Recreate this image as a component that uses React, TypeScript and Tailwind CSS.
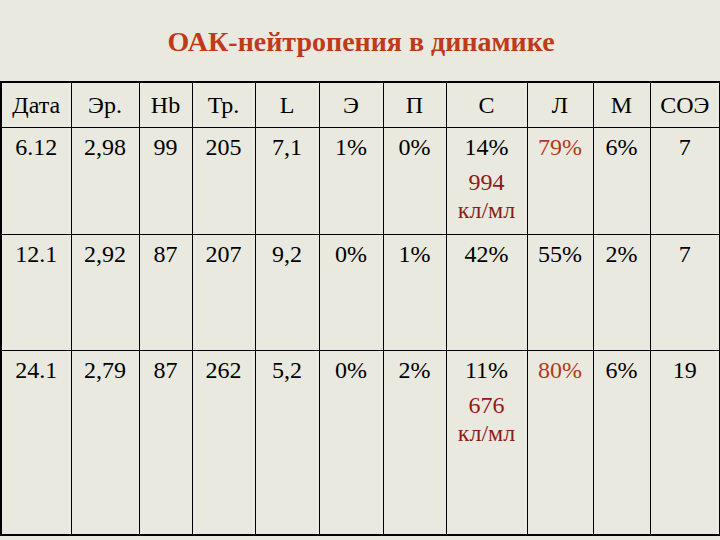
import React from "react";

const widths = [70, 68, 53, 63, 64, 64, 63, 81, 66, 57, 70];
const headers = ["Дата", "Эр.", "Hb", "Тр.", "L", "Э", "П", "С", "Л", "М", "СОЭ"];

type Cell = React.ReactNode;

const rows: { h: string; cells: Cell[] }[] = [
  {
    h: "h-[107px]",
    cells: [
      "6.12",
      "2,98",
      "99",
      "205",
      "7,1",
      "1%",
      "0%",
      <div key="c">
        <div>14%</div>
        <div className="mt-[7px] text-[#8e1b1b]">994</div>
        <div className="text-[#8e1b1b]">кл/мл</div>
      </div>,
      <span key="l" className="text-[#b23a1c]">79%</span>,
      "6%",
      "7",
    ],
  },
  {
    h: "h-[116px]",
    cells: ["12.1", "2,92", "87", "207", "9,2", "0%", "1%", "42%", "55%", "2%", "7"],
  },
  {
    h: "h-[185px]",
    cells: [
      "24.1",
      "2,79",
      "87",
      "262",
      "5,2",
      "0%",
      "2%",
      <div key="c">
        <div>11%</div>
        <div className="mt-[7px] text-[#8e1b1b]">676</div>
        <div className="text-[#8e1b1b]">кл/мл</div>
      </div>,
      <span key="l" className="text-[#b23a1c]">80%</span>,
      "6%",
      "19",
    ],
  },
];

export default function App() {
  return (
    <div className="w-[720px] h-[540px] bg-[#e9e9df] overflow-hidden text-black font-['Liberation_Serif','DejaVu_Serif',serif]">
      <div className="h-[81px] pt-[26px] text-center">
        <h1 className="text-[28px] leading-[32px] font-bold text-[#bf3a1a] pl-[2px] font-['Liberation_Serif','DejaVu_Serif',serif]">
          ОАК-нейтропения в динамике
        </h1>
      </div>
      <table className="table-fixed border-collapse w-[719px] border-2 border-black text-[24px] leading-[28px] text-black font-['Liberation_Serif','DejaVu_Serif',serif]">
        <colgroup>
          {widths.map((w, i) => (
            <col key={i} style={{ width: w }} />
          ))}
        </colgroup>
        <tbody>
          <tr className="h-[45px]">
            {headers.map((t, i) => (
              <td key={i} className="border border-black text-center align-middle p-0">
                {t}
              </td>
            ))}
          </tr>
          {rows.map((r, ri) => (
            <tr key={ri} className={r.h}>
              {r.cells.map((c, ci) => (
                <td key={ci} className="border border-black text-center align-top p-0 pt-[5px]">
                  {c}
                </td>
              ))}
            </tr>
          ))}
        </tbody>
      </table>
    </div>
  );
}
